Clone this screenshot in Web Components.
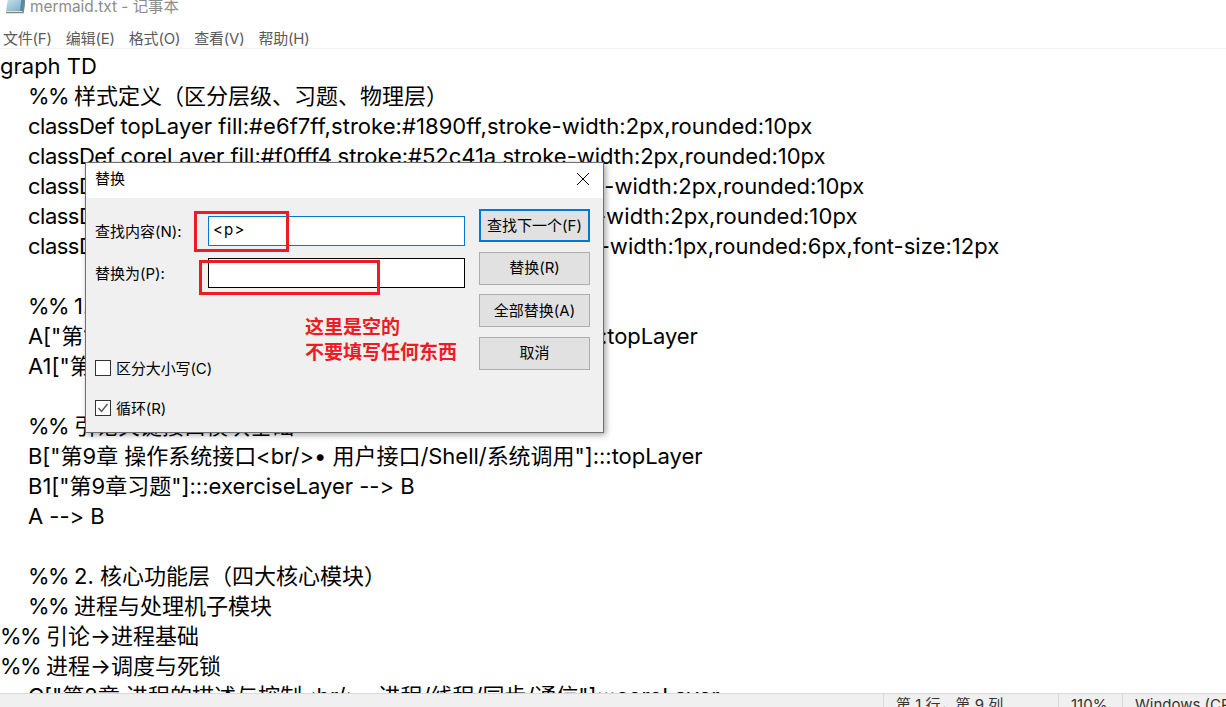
<!DOCTYPE html>
<html lang="zh-CN"><head><meta charset="utf-8"><style>
html,body{margin:0;padding:0;height:100%;overflow:hidden;background:#fff}
body{font-family:Inter,"Noto Sans CJK SC",sans-serif}
.p{letter-spacing:-1.7px}
.c{letter-spacing:-.5px}
</style></head><body>
<notepad-window>
<title-bar slot="title">mermaid.txt - 记事本</title-bar>
<menu-bar slot="menu"><span>文件(F)</span><span>编辑(E)</span><span>格式(O)</span><span>查看(V)</span><span>帮助(H)</span></menu-bar>
<text-editor slot="editor">
<code-line>graph TD</code-line>
<code-line indent><span class="p">%%</span> 样式定义（区分层级、习题、物理层）</code-line>
<code-line indent style="letter-spacing:.05px"><span class="c">classDef</span> topLayer fill:#e6f7ff,stroke:#1890ff,stroke-width:2px,rounded:10px</code-line>
<code-line indent style="letter-spacing:-.03px"><span class="c">classDef</span> coreLayer fill:#f0fff4,stroke:#52c41a,stroke-width:2px,rounded:10px</code-line>
<code-line indent style="letter-spacing:.02px"><span class="c">classDef</span> physicalLayer fill:#fff7e6,stroke:#fa8c16,stroke-width:2px,rounded:10px</code-line>
<code-line indent style="letter-spacing:.09px"><span class="c">classDef</span> deviceLayer fill:#f9f0ff,stroke:#722ed1,stroke-width:2px,rounded:10px</code-line>
<code-line indent style="letter-spacing:.04px"><span class="c">classDef</span> exerciseLayer fill:#fff1f0,stroke:#ffa39e,stroke-width:1px,rounded:6px,font-size:12px</code-line>
<code-line></code-line>
<code-line indent><span class="p">%%</span> 1. 顶层接口层（操作系统总览）</code-line>
<code-line indent style="letter-spacing:-.08px">A["第1章 操作系统引论&lt;br/&gt;• 基本概念/特征/功能/发展"]:::topLayer</code-line>
<code-line indent>A1["第1章习题"]:::exerciseLayer --&gt; A</code-line>
<code-line></code-line>
<code-line indent><span class="p">%%</span> 引论关键接口模块基础</code-line>
<code-line indent style="letter-spacing:-.03px">B["第9章 操作系统接口&lt;br/&gt;• 用户接口/Shell/系统调用"]:::topLayer</code-line>
<code-line indent>B1["第9章习题"]:::exerciseLayer --&gt; B</code-line>
<code-line indent>A --&gt; B</code-line>
<code-line></code-line>
<code-line indent><span class="p">%%</span> 2. 核心功能层（四大核心模块）</code-line>
<code-line indent><span class="p">%%</span> 进程与处理机子模块</code-line>
<code-line><span class="p">%%</span> 引论→进程基础</code-line>
<code-line><span class="p">%%</span> 进程→调度与死锁</code-line>
<code-line indent>C["第2章 进程的描述与控制&lt;br/&gt;• 进程/线程/同步/通信"]:::coreLayer</code-line>
</text-editor>
<status-bar slot="status"><span>第 1 行，第 9 列</span><span>110%</span><span>Windows (CRLF)</span></status-bar>
<replace-dialog slot="dialog"></replace-dialog>
</notepad-window>
<script>
function def(name, css, html){
  customElements.define(name, class extends HTMLElement{
    constructor(){super();const r=this.attachShadow({mode:'open'});r.innerHTML='<style>'+css+'</style>'+html}
  });
}
const UI='Inter,"Noto Sans CJK SC",sans-serif';
def('notepad-window',`:host{display:flex;flex-direction:column;position:relative;width:1226px;height:707px;overflow:hidden;background:#fff}
.body{flex:1;min-height:0;overflow:hidden}`,
`<slot name="title"></slot><slot name="menu"></slot><div class="body"><slot name="editor"></slot></div><slot name="status"></slot><slot name="dialog"></slot>`);
def('title-bar',`:host{display:flex;align-items:center;height:14px;padding:0 0 0 5px;gap:5px;font:15.4px/14px ${UI};color:#8c8c8c;white-space:nowrap}
svg{flex:none}`,
`<svg width="20" height="16" viewBox="0 0 20 16"><defs><linearGradient id="g" x1="0" x2="1" y1="0" y2="1"><stop offset="0" stop-color="#cfe6ef"/><stop offset="1" stop-color="#6fa9c4"/></linearGradient></defs><path d="M3 -1H20L18 12H1Z" fill="url(#g)"/><path d="M16.5 -1H20L18 12H15Z" fill="#4f8aa8"/><path d="M1 13.5H18L20 0" stroke="#7d8b7e" stroke-width="1.6" fill="none"/></svg><slot></slot>`);
def('menu-bar',`:host{display:flex;height:35px;box-sizing:border-box;padding:15px 0 0 3px;gap:14px;font:15px/19px ${UI};letter-spacing:-.2px;color:#5a5a5a;border-bottom:1px solid #f0f0f0;white-space:nowrap}`,`<slot></slot>`);
def('text-editor',`:host{display:block;padding-top:2px;color:#000}`,`<slot></slot>`);
def('code-line',`:host{display:block;height:30px;font:22px/30px ${UI};font-variant-ligatures:none;font-feature-settings:"calt" 0,"liga" 0;white-space:pre}
:host([indent]){padding-left:28px}`,`<slot></slot>`);
def('status-bar',`:host{display:flex;flex:none;height:13px;background:#f0f0f0;border-top:1px solid #d9d9d9;padding-left:883px;font:15px/22px ${UI};color:#333;white-space:nowrap;overflow:hidden}
::slotted(span){border-left:1px solid #d9d9d9;padding:0 0 0 12px;box-sizing:border-box;flex:none}
::slotted(span:nth-child(1)){width:175px}::slotted(span:nth-child(2)){width:64px}`,`<slot></slot>`);
def('dlg-button',`:host{display:flex;align-items:center;justify-content:center;width:111px;height:33px;box-sizing:border-box;border:1px solid #adadad;background:#e1e1e1;font-size:15px;color:#000}
:host([focused]){border:2px solid #0078d7}`,`<slot></slot>`);
def('replace-dialog',`:host{position:absolute;left:85px;top:162px;width:519px;height:271px;box-sizing:border-box;background:#f0f0f0;border:1px solid #6f6f6f;box-shadow:2px 2px 6px rgba(0,0,0,.35);font:15px/20px ${UI};color:#000;display:flex;flex-direction:column}
.head{height:35px;box-sizing:border-box;padding:0 13px 3px 9px;background:#fff;display:flex;align-items:center;justify-content:space-between;flex:none}
.main{flex:1;display:flex;justify-content:space-between;padding:11px 13px 0 9px;position:relative}
.left{display:flex;flex-direction:column;width:370px}
.row{display:flex;align-items:center;height:30px;margin-bottom:12px}
.row label{width:113px;flex:none;padding-top:2px}
.input{width:257px;height:30px;box-sizing:border-box;border:1px solid #000;background:#fff;padding-left:4px;line-height:26px;letter-spacing:1.2px}
.input.on{border-color:#0078d7}
.checks{display:flex;flex-direction:column;gap:20px;margin-top:58px}
.right{display:flex;flex-direction:column;gap:9.5px}
.note{position:absolute;left:219px;top:115px;color:#ed1c24;font:700 19px/25px "Noto Sans CJK SC",sans-serif;white-space:nowrap}
.mark{position:absolute;border:3px solid #ed1c24;box-sizing:border-box}
.check{display:flex;align-items:center;gap:5px;height:20px;letter-spacing:-.1px}
.check span+span{padding-top:2px}
.box{width:16px;height:16px;box-sizing:border-box;border:1px solid #333;background:#fff;flex:none}
.box svg{display:block}`,
`<div class="head"><span>替换</span><svg width="14" height="14" viewBox="0 0 14 14"><path d="M1 1l12 12M13 1L1 13" stroke="#000" stroke-width="1" fill="none"/></svg></div>
<div class="main"><div class="left">
<div class="row" style="margin-top:7px"><label>查找内容(N):</label><div class="input on">&lt;p&gt;</div></div>
<div class="row"><label>替换为(P):</label><div class="input"></div></div>
<div class="checks"><div class="check"><span class="box"></span><span>区分大小写(C)</span></div>
<div class="check"><span class="box"><svg width="14" height="14" viewBox="0 0 14 14"><path d="M2.5 7l3 3.5 6-7.5" stroke="#555" stroke-width="1.4" fill="none"/></svg></span><span>循环(R)</span></div></div>
</div>
<div class="right"><dlg-button focused>查找下一个(F)</dlg-button><dlg-button>替换(R)</dlg-button><dlg-button>全部替换(A)</dlg-button><dlg-button>取消</dlg-button></div>
<div class="note">这里是空的<br>不要填写任何东西</div>
<div class="mark" style="left:108px;top:13px;width:95px;height:41px"></div>
<div class="mark" style="left:113px;top:62px;width:181px;height:35px"></div>
</div>`);
</script>
</body></html>
